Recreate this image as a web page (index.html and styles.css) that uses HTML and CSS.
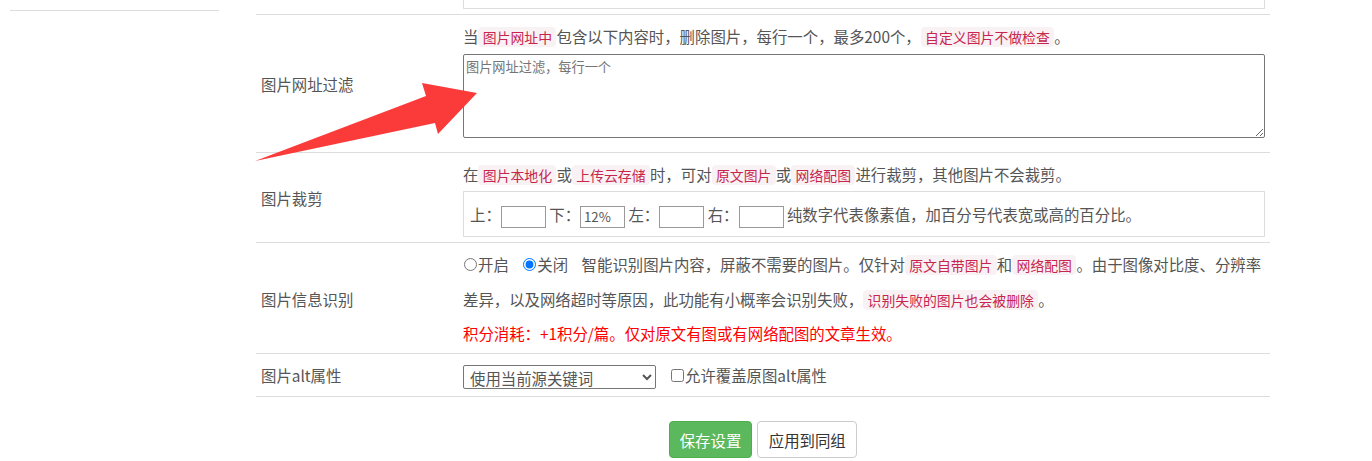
FILE: index.html
```html
<!DOCTYPE html>
<html lang="zh-CN">
<head>
<meta charset="utf-8">
<title>图片设置</title>
<link rel="stylesheet" href="styles.css">
</head>
<body>
<div class="page">
  <aside class="sidebar"><div class="side-item"></div></aside>
  <main class="main">
    <table class="settings">
      <tr class="row-partial">
        <td class="label"></td>
        <td class="field"><div class="partial-box"></div></td>
      </tr>
      <tr>
        <td class="label">图片网址过滤</td>
        <td class="field">
          <div class="line">当<code>图片网址中</code>包含以下内容时，删除图片，每行一个，最多200个，<code>自定义图片不做检查</code>。</div>
          <textarea class="filter" placeholder="图片网址过滤，每行一个"></textarea>
        </td>
      </tr>
      <tr>
        <td class="label">图片裁剪</td>
        <td class="field">
          <div class="line">在<code>图片本地化</code>或<code>上传云存储</code>时，可对<code>原文图片</code>或<code>网络配图</code>进行裁剪，其他图片不会裁剪。</div>
          <div class="crop">上：<input class="num" type="text"> 下：<input class="num" type="text" value="12%"> 左：<input class="num" type="text"> 右：<input class="num" type="text"> 纯数字代表像素值，加百分号代表宽或高的百分比。</div>
        </td>
      </tr>
      <tr class="row-ocr">
        <td class="label">图片信息识别</td>
        <td class="field">
          <div class="line"><label class="opt"><input type="radio" name="ocr">开启</label><label class="opt"><input type="radio" name="ocr" checked>关闭</label>智能识别图片内容，屏蔽不需要的图片。仅针对<code>原文自带图片</code>和<code>网络配图</code>。由于图像对比度、分辨率差异，以及网络超时等原因，此功能有小概率会识别失败，<code>识别失败的图片也会被删除</code>。</div>
          <div class="line cost">积分消耗：+1积分/篇。仅对原文有图或有网络配图的文章生效。</div>
        </td>
      </tr>
      <tr class="row-last">
        <td class="label">图片alt属性</td>
        <td class="field">
          <div class="line"><select class="alt-select"><option>使用当前源关键词</option></select><label class="chk"><input type="checkbox">允许覆盖原图alt属性</label></div>
        </td>
      </tr>
    </table>
    <div class="actions">
      <button class="btn btn-save" type="button">保存设置</button>
      <button class="btn btn-default" type="button">应用到同组</button>
    </div>
  </main>
</div>
<svg class="arrow" width="500" height="200" viewBox="0 0 500 200" aria-hidden="true">
  <polygon points="255,161 426,96 422,83 477,93 438,134 435,123" fill="#fb3a3a"/>
</svg>
</body>
</html>
```
FILE: styles.css
```css
* { box-sizing: border-box; }
html, body { margin: 0; background: #fff; }
body {
  font-family: "Noto Sans CJK SC", "Microsoft YaHei", sans-serif;
  font-size: 15.4px;
  color: #555;
  position: relative;
}
.page { display: flex; align-items: flex-start; }
.sidebar { margin-left: 10px; width: 209px; }
.side-item { height: 11px; border-bottom: 1px solid #ddd; }
.main { margin-left: 37px; width: 1014px; }

.settings { width: 1014px; border-collapse: collapse; table-layout: fixed; }
.settings td {
  border-top: 1px solid #ddd;
  padding: 4px 5px 3px 8px;
  vertical-align: top;
}
.settings td.label { width: 199px; padding-left: 5px; vertical-align: middle; }
.settings .row-ocr td { padding-bottom: 2px; }
.settings .row-last td { border-bottom: 1px solid #ddd; padding-bottom: 4px; }
.settings .row-partial td { border-top: none; padding: 0 5px 5px 8px; }
.partial-box { height: 9px; border: 1px solid #ddd; border-top: none; }

.line { line-height: 34.5px; }
code {
  font-family: inherit;
  font-size: 13.86px;
  line-height: 1;
  color: #c7254e;
  background: #f9f2f4;
  padding: 0 4.4px;
  border-radius: 4px;
}
.cost { color: #f00; }

.filter {
  display: block;
  width: 100%;
  height: 84px;
  margin: 0 0 11px;
  padding: 2px;
  font-family: "Noto Sans CJK SC", sans-serif;
  font-size: 13.2px;
  color: #555;
  border: 1px solid #767676;
  border-radius: 2px;
}
.filter::placeholder { color: #757575; }

.crop {
  border: 1px solid #ddd;
  height: 46px;
  padding: 0 6px;
  line-height: 44px;
  margin-bottom: 2px;
}
.num {
  width: 45px;
  height: 22px;
  border: 1px solid #999;
  padding: 1px 3px;
  font-family: "Noto Sans CJK SC", sans-serif;
  font-size: 13.2px;
  line-height: 18px;
  color: #555;
  vertical-align: middle;
  border-radius: 0;
}

.opt { margin-right: 13.5px; }
.opt input { margin: 0 1px; width: 13px; height: 13px; }

.alt-select {
  width: 193px;
  height: 24px;
  font-family: "Noto Sans CJK SC", sans-serif;
  font-size: 15.4px;
  line-height: 20px;
  color: #555;
  border: 1px solid #767676;
  border-radius: 2px;
  padding: 0 2px;
  vertical-align: middle;
  background: #fff;
}
.chk { margin-left: 15px; }
.chk input { margin: 0 1px 0 0; width: 13px; height: 13px; }

.actions { display: flex; justify-content: center; gap: 5px; margin-top: 24px; }
.btn {
  font-family: "Noto Sans CJK SC", sans-serif;
  font-size: 15.4px;
  line-height: 22px;
  padding: 6.5px 10.5px;
  border: 1px solid #ccc;
  border-radius: 4px;
  background: #fff;
  color: #333;
}
.btn-save { background: #5cb85c; border-color: #4cae4c; color: #fff; padding: 6.5px 10px; }

.arrow { position: absolute; left: 0; top: 0; pointer-events: none; }
```
